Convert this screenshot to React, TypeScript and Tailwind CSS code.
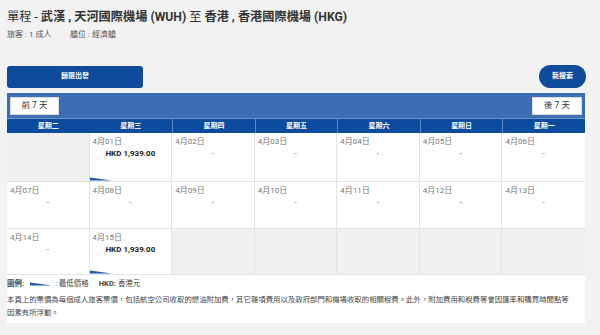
import React from "react";

type Cell = { date?: string; price?: string; low?: boolean; empty?: boolean };

const rows: Cell[][] = [
  [
    { empty: true },
    { date: "4月01日", price: "HKD 1,939.00", low: true },
    { date: "4月02日" },
    { date: "4月03日" },
    { date: "4月04日" },
    { date: "4月05日" },
    { date: "4月06日" },
  ],
  [
    { date: "4月07日" },
    { date: "4月08日" },
    { date: "4月09日" },
    { date: "4月10日" },
    { date: "4月11日" },
    { date: "4月12日" },
    { date: "4月13日" },
  ],
  [
    { date: "4月14日" },
    { date: "4月15日", price: "HKD 1,939.00", low: true },
    { empty: true },
    { empty: true },
    { empty: true },
    { empty: true },
    { empty: true },
  ],
];

const days = ["星期二", "星期三", "星期四", "星期五", "星期六", "星期日", "星期一"];

function Wedge({ className }: { className?: string }) {
  return (
    <svg width="22" height="4" viewBox="0 0 22 4" className={className}>
      <polygon points="0,0.5 22,3.6 0,3.6" fill="#1f5aa8" />
    </svg>
  );
}

export default function App() {
  const rowH = ["h-[49px]", "h-[47px]", "h-[46px]"];
  return (
    <div
      className="w-[600px] h-[335px] overflow-hidden bg-[#f2f2f2] text-[#333]"
      style={{ fontFamily: 'Roboto, "Noto Sans CJK TC", "Liberation Sans", sans-serif' }}
    >
      <div className="pl-[7px] pt-[9px] w-[585px]">
        <h1 className="text-[12.2px] leading-[16px] text-[#333] whitespace-nowrap">
          <span className="font-normal">單程 - </span>
          <span className="font-bold">武漢 , 天河國際機場 (WUH)</span>
          <span className="font-normal"> 至 </span>
          <span className="font-bold">香港 , 香港國際機場 (HKG)</span>
        </h1>
        <div className="mt-[5px] flex text-[8px] leading-[10px] text-[#555]">
          <span className="w-[63px]">旅客 : 1 成人</span>
          <span>艙位 : 經濟艙</span>
        </div>

        <div className="mt-[25px] flex justify-between items-center w-[579px]">
          <button className="w-[136px] h-[22px] rounded-[3px] bg-[#0e4b9b] text-white text-[7px] font-bold">
            篩選出發
          </button>
          <button className="w-[47px] h-[23px] rounded-full bg-[#0e4b9b] text-white text-[7px] font-bold">
            新搜索
          </button>
        </div>

        <div className="mt-[5px] w-[578px]">
          <div className="h-[25px] bg-[#3d6db3] flex items-center justify-between px-[3px]">
            <button className="w-[49px] h-[18px] bg-white border border-[#dcdcdc] text-[8.5px] text-[#333]">
              前 7 天
            </button>
            <button className="w-[50px] h-[18px] bg-white border border-[#dcdcdc] text-[8.5px] text-[#333]">
              後 7 天
            </button>
          </div>
          <div className="grid grid-cols-7 h-[15px] bg-[#0d4b9f] border-t border-[#6f94c9]">
            {days.map((d, i) => (
              <div
                key={d}
                className={`flex items-center justify-center text-white text-[7px] font-bold ${
                  i >= 2 ? "border-l border-[#5f88c2]" : ""
                }`}
              >
                {d}
              </div>
            ))}
          </div>
          {rows.map((row, ri) => (
            <div key={ri} className={`grid grid-cols-7 ${rowH[ri]} border-b border-[#e2e2e2]`}>
              {row.map((c, ci) => (
                <div
                  key={ci}
                  className={`relative ${c.empty ? "bg-[#f0f0f0]" : "bg-white"} ${
                    ci < 6 ? "border-r border-[#e2e2e2]" : ""
                  }`}
                >
                  {!c.empty && (
                    <>
                      <div className="pl-[3px] pt-[4px] text-[8px] leading-[10px] text-[#777]">
                        {c.date}
                      </div>
                      <div
                        className={`mt-[2px] text-center leading-[10px] ${
                          c.price ? "text-[8px] font-bold text-[#222]" : "text-[8px] text-[#666]"
                        }`}
                      >
                        {c.price ?? "-"}
                      </div>
                      {c.low && <Wedge className="absolute left-0 bottom-0" />}
                    </>
                  )}
                </div>
              ))}
            </div>
          ))}
          <div className="bg-white h-[48px] pt-[4px] text-[#444]">
            <div className="flex items-center text-[7.5px] leading-[10px] whitespace-nowrap">
              <span className="font-bold">圖例:</span>
              <Wedge className="ml-[6px] mr-[3px]" />
              <span>: 最低價格</span>
              <span className="ml-[10px] font-bold">HKD:</span>
              <span className="ml-[2px]">香港元</span>
            </div>
            <p className="mt-[4px] text-[7.4px] leading-[13px] whitespace-nowrap">
              本頁上的票價為每個成人旅客票價，包括航空公司收取的燃油附加費，其它雜項費用以及政府部門和機場收取的相關稅費。此外，附加費用和稅費等會因匯率和購買時間點等
              <br />
              因素有所浮動。
            </p>
          </div>
        </div>
      </div>
    </div>
  );
}
